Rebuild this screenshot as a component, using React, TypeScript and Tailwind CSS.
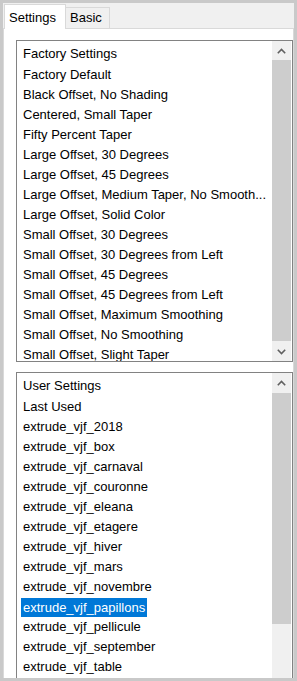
import React from "react";

const factory = [
  "Factory Default",
  "Black Offset, No Shading",
  "Centered, Small Taper",
  "Fifty Percent Taper",
  "Large Offset, 30 Degrees",
  "Large Offset, 45 Degrees",
  "Large Offset, Medium Taper, No Smooth...",
  "Large Offset, Solid Color",
  "Small Offset, 30 Degrees",
  "Small Offset, 30 Degrees from Left",
  "Small Offset, 45 Degrees",
  "Small Offset, 45 Degrees from Left",
  "Small Offset, Maximum Smoothing",
  "Small Offset, No Smoothing",
  "Small Offset, Slight Taper",
];

const user = [
  "Last Used",
  "extrude_vjf_2018",
  "extrude_vjf_box",
  "extrude_vjf_carnaval",
  "extrude_vjf_couronne",
  "extrude_vjf_eleana",
  "extrude_vjf_etagere",
  "extrude_vjf_hiver",
  "extrude_vjf_mars",
  "extrude_vjf_novembre",
  "extrude_vjf_papillons",
  "extrude_vjf_pellicule",
  "extrude_vjf_september",
  "extrude_vjf_table",
];

function Chevron({ up }: { up?: boolean }) {
  return (
    <svg width="9" height="6" viewBox="0 0 9 6" className="block">
      <path
        d={up ? "M0.8 5.2 L4.5 1.5 L8.2 5.2" : "M0.8 0.8 L4.5 4.5 L8.2 0.8"}
        fill="none"
        stroke="#606060"
        strokeWidth="1.6"
      />
    </svg>
  );
}

function ListBox({
  header,
  items,
  selected,
  height,
  thumbTop,
  thumbHeight,
  showDown,
}: {
  header: string;
  items: string[];
  selected?: string;
  height: number;
  thumbTop: number;
  thumbHeight: number;
  showDown: boolean;
}) {
  return (
    <div
      className="ml-[12px] w-[277px] shrink-0 border border-[#828282] bg-white flex overflow-hidden"
      style={{ height }}
    >
      <div className="flex-1 overflow-hidden pt-[1px]">
        <div className="h-[23px] flex items-center pl-[6px] text-black">{header}</div>
        {items.map((t) => (
          <div key={t} className="h-[20px] flex items-center pl-[4px] whitespace-nowrap">
            <span
              className={
                t === selected
                  ? "bg-[#0078d7] text-white px-[2px] h-[19px] leading-[19px]"
                  : "text-black px-[2px]"
              }
            >
              {t}
            </span>
          </div>
        ))}
      </div>
      <div className="w-[19px] mr-[1px] bg-[#f0f0f0] relative shrink-0">
        <div className="h-[19px] flex items-center justify-center">
          <Chevron up />
        </div>
        <div
          className="absolute left-0 right-0 bg-[#cdcdcd]"
          style={{ top: thumbTop, height: thumbHeight }}
        />
        {showDown && (
          <div className="absolute bottom-0 left-0 right-0 h-[19px] flex items-center justify-center">
            <Chevron />
          </div>
        )}
      </div>
    </div>
  );
}

export default function App() {
  return (
    <div
      className="w-[297px] h-[681px] bg-[#c9c9c9] p-[3px] overflow-hidden text-[13px]"
      style={{ fontFamily: '"Liberation Sans", Arial, sans-serif' }}
    >
      <div className="w-[291px] h-[675px] bg-[#f0f0f0] flex flex-col overflow-hidden">
        <div className="h-[25px] flex items-end pl-[1px] shrink-0">
          <div className="h-[25px] w-[62px] bg-white border border-b-0 border-[#d9d9d9] flex items-start pt-[3px] pl-[4px] relative z-10 -mb-[1px]">
            Settings
          </div>
          <div className="h-[21px] w-[44px] bg-[#f0f0f0] border border-l-0 border-b-0 border-[#d9d9d9] flex items-center pl-[4px]">
            Basic
          </div>
        </div>
        <div className="flex-1 bg-white border border-[#d9d9d9] border-b-0 flex flex-col pt-[11px] overflow-hidden">
          <ListBox
            header="Factory Settings"
            items={factory}
            height={322}
            thumbTop={19}
            thumbHeight={281}
            showDown
          />
          <div className="h-[10px] shrink-0" />
          <ListBox
            header="User Settings"
            items={user}
            selected="extrude_vjf_papillons"
            height={340}
            thumbTop={20}
            thumbHeight={231}
            showDown={false}
          />
        </div>
      </div>
    </div>
  );
}
